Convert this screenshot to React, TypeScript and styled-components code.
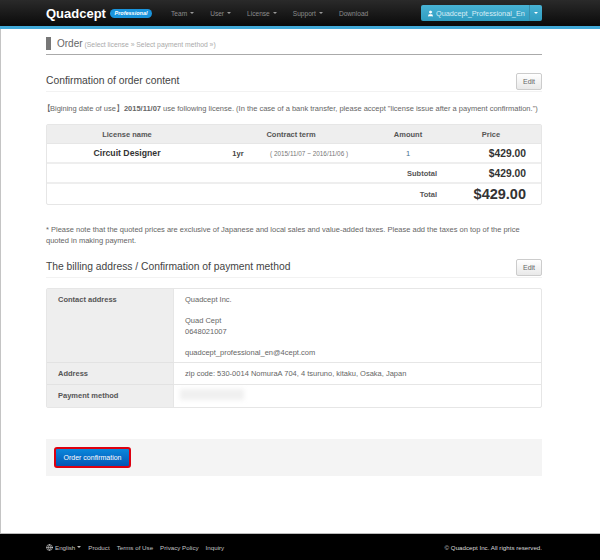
import React from 'react';
import styled, { createGlobalStyle } from 'styled-components';
import { User, Globe } from 'lucide-react';

const GlobalStyle = createGlobalStyle`
  html, body { margin: 0; padding: 0; background: #fff; }
  body { font-family: "Liberation Sans", Arial, sans-serif; color: #555; }
  * { box-sizing: border-box; }
`;

const Page = styled.div`
  width: 600px;
  height: 560px;
  display: flex;
  flex-direction: column;
  overflow: hidden;
`;

const Navbar = styled.header`
  height: 29px;
  flex: none;
  background: linear-gradient(#2a2a2a, #0a0a0a);
  border-bottom: 3px solid #41a9d8;
  padding: 0 58px 0 46px;
  display: flex;
  align-items: center;
`;

const Logo = styled.span`
  font-size: 13px;
  font-weight: 700;
  color: #fff;
  width: 64px;
`;

const Badge = styled.span`
  width: 42px;
  height: 9px;
  border-radius: 5px;
  background: #1a94dc;
  color: #fff;
  font-size: 5.5px;
  font-style: italic;
  font-weight: 700;
  display: flex;
  align-items: center;
  justify-content: center;
`;

const NavItems = styled.nav`
  display: flex;
  margin-left: 19px;
  gap: 16px;
`;

const NavItem = styled.span`
  font-size: 6.6px;
  color: #8c8c8c;
  display: flex;
  align-items: center;
  gap: 3px;
`;

const Caret = styled.i<{ $color?: string }>`
  width: 0;
  height: 0;
  border-left: 2px solid transparent;
  border-right: 2px solid transparent;
  border-top: 2px solid ${(p) => p.$color || '#999'};
`;

const UserButton = styled.div`
  margin-left: auto;
  width: 121px;
  height: 16px;
  display: flex;
  border-radius: 2px;
  overflow: hidden;
  background: linear-gradient(#48b2d4, #2f9cc0);
  color: #d8eef6;
  font-size: 7.3px;
`;

const UserName = styled.span`
  flex: 1;
  display: flex;
  align-items: center;
  gap: 2px;
  padding-left: 6px;
  white-space: nowrap;
`;

const UserToggle = styled.span`
  width: 13px;
  border-left: 1px solid #3a90ad;
  display: flex;
  align-items: center;
  justify-content: center;
`;

const Main = styled.main`
  flex: 1;
  padding: 8px 58px 0 46px;
  border-left: 1px solid #c4c4c4;
`;

const Content = styled.div`
  margin-left: -1px;
`;

const PageTitle = styled.div`
  height: 18px;
  border-bottom: 1px solid #aaa;
  display: flex;
  align-items: flex-start;
  gap: 6px;
  color: #777;
  font-size: 9px;
  line-height: 13px;
`;

const TitleBar = styled.i`
  width: 5px;
  height: 13px;
  background: #777;
`;

const TitleMain = styled.span`
  font-size: 10px;
  color: #666;
  margin-right: 2px;
`;

const TitleSteps = styled.span`
  font-size: 6.8px;
  color: #aaa;
`;

const SectionHeader = styled.div<{ $gap: number }>`
  height: 19px;
  margin-top: ${(p) => p.$gap}px;
  border-bottom: 1px solid #f2f2f2;
  display: flex;
  align-items: flex-start;
  justify-content: space-between;
`;

const SectionTitle = styled.h2`
  margin: 0;
  font-size: 10.3px;
  line-height: 16px;
  font-weight: 400;
  color: #444;
`;

const EditButton = styled.button`
  width: 26px;
  height: 17px;
  padding: 0;
  font: 7px "Liberation Sans", Arial, sans-serif;
  color: #666;
  background: linear-gradient(#fff, #e9e9e9);
  border: 1px solid #ccc;
  border-radius: 2px;
`;

const Paragraph = styled.p<{ $gap: number }>`
  margin: ${(p) => p.$gap}px 0 0;
  font-size: 7.5px;
  line-height: 11px;
  color: #666;
`;

const OpenBracket = styled.span`
  margin-left: -3px;
  margin-right: -1px;
`;

const OrderTable = styled.table`
  width: 496px;
  table-layout: fixed;
  border-collapse: separate;
  border-spacing: 0;
  border: 1px solid #e6e6e6;
  border-radius: 2px;
  margin-top: 10px;
  font-size: 7.5px;
  color: #444;
`;

const HeadCell = styled.th`
  height: 19px;
  padding: 0;
  background: #eee;
  font-weight: 700;
  color: #555;
  text-align: center;
  border-bottom: 1px solid #e6e6e6;
`;

const Cell = styled.td<{ $align?: string; $rule?: boolean }>`
  height: 20px;
  padding: ${(p) => (p.$align === 'right' ? '0 4px 0 0' : '0')};
  text-align: ${(p) => p.$align || 'center'};
  border-bottom: ${(p) => (p.$rule ? '2px solid #eee' : 'none')};
`;

const ProductName = styled.strong`
  font-size: 8.7px;
  color: #333;
`;

const Term = styled.span`
  display: block;
  text-align: left;
  padding-left: 1px;
  font-size: 6.4px;
  color: #777;
`;

const Quantity = styled.span`
  color: #46708e;
`;

const TotalLabel = styled.strong`
  color: #555;
`;

const Price = styled.strong<{ $big?: boolean }>`
  display: block;
  padding-right: 15px;
  text-align: right;
  font-size: ${(p) => (p.$big ? '14.5px' : '10.3px')};
  color: #333;
`;

const BillingTable = styled.table`
  width: 496px;
  table-layout: fixed;
  border-collapse: separate;
  border-spacing: 0;
  border: 1px solid #e6e6e6;
  border-radius: 2px;
  margin-top: 10px;
  font-size: 7.5px;
`;

const BillingHead = styled.th<{ $last?: boolean }>`
  width: 127px;
  padding: 6px 0 0 11px;
  background: #eee;
  color: #555;
  font-weight: 700;
  line-height: 10.5px;
  text-align: left;
  vertical-align: top;
  border-bottom: ${(p) => (p.$last ? 'none' : '1px solid #e2e2e2')};
  border-right: 1px solid #e6e6e6;
`;

const BillingCell = styled.td<{ $last?: boolean }>`
  height: 22px;
  padding: 6px 0 3.5px 11px;
  color: #666;
  line-height: 10.5px;
  vertical-align: top;
  border-bottom: ${(p) => (p.$last ? 'none' : '1px solid #e6e6e6')};
`;

const BlurredValue = styled.div`
  width: 64px;
  height: 11px;
  margin: -2px 0 0 -5px;
  background: #f0f0f0;
  filter: blur(2px);
`;

const ActionPanel = styled.div`
  margin-top: 31px;
  height: 37px;
  background: #f4f4f4;
  padding: 8px;
`;

const ConfirmButton = styled.button`
  display: block;
  width: 77px;
  height: 21px;
  padding: 0;
  border: 2px solid #dd0010;
  border-radius: 3px;
  background: linear-gradient(#0a88dc, #0455b4);
  color: #fff;
  font: 7px "Liberation Sans", Arial, sans-serif;
`;

const Footer = styled.footer`
  height: 27px;
  flex: none;
  background: #000;
  border-top: 1px solid #bbb;
  padding: 0 58px 0 46px;
  display: flex;
  align-items: center;
  color: #c4c4c4;
  font-size: 6.2px;
`;

const FooterLinks = styled.div`
  display: flex;
  align-items: center;
  gap: 7px;
`;

const Language = styled.span`
  display: flex;
  align-items: center;
  gap: 2px;
`;

const Copyright = styled.span`
  margin-left: auto;
  font-size: 6.2px;
  color: #ddd;
`;

const App: React.FC = () => {
  return (
    <>
      <GlobalStyle />
      <Page>
        <Navbar>
          <Logo>Quadcept</Logo>
          <Badge>Professional</Badge>
          <NavItems>
            <NavItem>Team <Caret /></NavItem>
            <NavItem>User <Caret /></NavItem>
            <NavItem>License <Caret /></NavItem>
            <NavItem>Support <Caret /></NavItem>
            <NavItem>Download</NavItem>
          </NavItems>
          <UserButton>
            <UserName>
              <User size={7} fill="#fff" color="#fff" />
              Quadcept_Professional_En
            </UserName>
            <UserToggle><Caret $color="#fff" /></UserToggle>
          </UserButton>
        </Navbar>

        <Main>
          <Content>
            <PageTitle>
              <TitleBar />
              <span>
                <TitleMain>Order</TitleMain>
                <TitleSteps>(Select license » Select payment method »)</TitleSteps>
              </span>
            </PageTitle>

            <SectionHeader $gap={18}>
              <SectionTitle>Confirmation of order content</SectionTitle>
              <EditButton>Edit</EditButton>
            </SectionHeader>
            <Paragraph $gap={11}>
              <OpenBracket>【</OpenBracket>Bigining date of use】<b>2015/11/07</b> use following license. (In the case of a bank transfer, please accept "license issue after a payment confirmation.")
            </Paragraph>

            <OrderTable>
              <colgroup>
                <col style={{ width: 160 }} />
                <col style={{ width: 62 }} />
                <col style={{ width: 106 }} />
                <col style={{ width: 66 }} />
                <col />
              </colgroup>
              <thead>
                <tr>
                  <HeadCell>License name</HeadCell>
                  <HeadCell colSpan={2}>Contract term</HeadCell>
                  <HeadCell>Amount</HeadCell>
                  <HeadCell>Price</HeadCell>
                </tr>
              </thead>
              <tbody>
                <tr>
                  <Cell $rule><ProductName>Circuit Designer</ProductName></Cell>
                  <Cell $rule><b>1yr</b></Cell>
                  <Cell $rule><Term>( 2015/11/07 ~ 2016/11/06 )</Term></Cell>
                  <Cell $rule><Quantity>1</Quantity></Cell>
                  <Cell $rule><Price>$429.00</Price></Cell>
                </tr>
                <tr>
                  <Cell $rule colSpan={4} $align="right"><TotalLabel>Subtotal</TotalLabel></Cell>
                  <Cell $rule><Price>$429.00</Price></Cell>
                </tr>
                <tr>
                  <Cell colSpan={4} $align="right"><TotalLabel>Total</TotalLabel></Cell>
                  <Cell><Price $big>$429.00</Price></Cell>
                </tr>
              </tbody>
            </OrderTable>

            <Paragraph $gap={19}>
              * Please note that the quoted prices are exclusive of Japanese and local sales and value-added taxes. Please add the taxes on top of the price quoted in making payment.
            </Paragraph>

            <SectionHeader $gap={13}>
              <SectionTitle>The billing address / Confirmation of payment method</SectionTitle>
              <EditButton>Edit</EditButton>
            </SectionHeader>

            <BillingTable>
              <tbody>
                <tr>
                  <BillingHead>Contact address</BillingHead>
                  <BillingCell>
                    Quadcept Inc.<br /><br />
                    Quad Cept<br />
                    0648021007<br /><br />
                    quadcept_professional_en@4cept.com
                  </BillingCell>
                </tr>
                <tr>
                  <BillingHead>Address</BillingHead>
                  <BillingCell>zip code: 530-0014 NomuraA 704, 4 tsuruno, kitaku, Osaka, Japan</BillingCell>
                </tr>
                <tr>
                  <BillingHead $last>Payment method</BillingHead>
                  <BillingCell $last><BlurredValue /></BillingCell>
                </tr>
              </tbody>
            </BillingTable>

            <ActionPanel>
              <ConfirmButton>Order confirmation</ConfirmButton>
            </ActionPanel>
          </Content>
        </Main>

        <Footer>
          <FooterLinks>
            <Language><Globe size={7} color="#ddd" /> English <Caret $color="#bbb" /></Language>
            <span>Product</span>
            <span>Terms of Use</span>
            <span>Privacy Policy</span>
            <span>Inquiry</span>
          </FooterLinks>
          <Copyright>© Quadcept Inc. All rights reserved.</Copyright>
        </Footer>
      </Page>
    </>
  );
};

export default App;
